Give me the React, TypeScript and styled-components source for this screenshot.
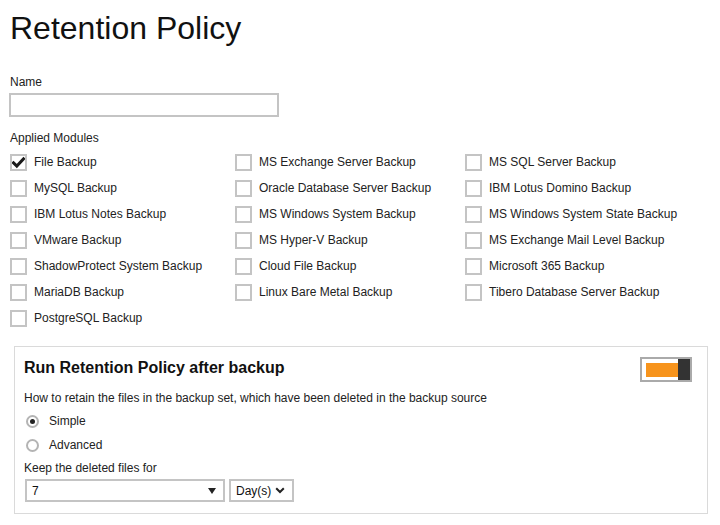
import styled, { createGlobalStyle } from "styled-components"

const GlobalStyle = createGlobalStyle`
  html, body {
    margin: 0;
    padding: 0;
    background: #fff;
  }
  body {
    font-family: "Liberation Sans", Arial, sans-serif;
    color: #222;
  }
`

const Page = styled.div`
  width: 720px;
  height: 525px;
  box-sizing: border-box;
  padding: 10px 10px 0;
  overflow: hidden;
`

const Title = styled.h1`
  margin: 0;
  font-size: 32px;
  line-height: 36px;
  font-weight: normal;
  color: #111;
`

const Label = styled.div<{ top?: number }>`
  margin-top: ${({ top = 0 }) => `${top}px`};
  font-size: 12px;
  line-height: 14px;
`

const TextInput = styled.input`
  display: block;
  margin: 4px 0 0 -1px;
  width: 270px;
  height: 24px;
  box-sizing: border-box;
  border: 2px solid #c4c4c4;
  outline: none;
  padding: 0 4px;
  font-family: inherit;
  font-size: 12px;
`

const ModuleGrid = styled.div`
  margin-top: 4px;
  display: grid;
  grid-template-columns: 225px 230px 1fr;
  grid-auto-rows: 26px;
`

const CheckRow = styled.label`
  display: flex;
  align-items: center;
  gap: 7px;
  font-size: 12px;
  line-height: 14px;
`

const Box = styled.span`
  width: 17px;
  height: 17px;
  box-sizing: border-box;
  border: 2px solid #c4c4c4;
  display: flex;
  align-items: center;
  justify-content: center;
  background: #fff;
`

const Panel = styled.section`
  margin: 15px 2px 0 4px;
  border: 1px solid #dadada;
  padding: 10px 15px 11px 9px;
`

const PanelHeader = styled.div`
  display: flex;
  justify-content: space-between;
  align-items: flex-start;
  height: 25px;
`

const PanelTitle = styled.h2`
  margin: 2px 0 0;
  font-size: 16px;
  line-height: 18px;
  font-weight: bold;
  color: #111;
`

const Toggle = styled.div`
  width: 52px;
  height: 25px;
  box-sizing: border-box;
  border: 2px solid #aaa;
  display: flex;
  align-items: center;
  padding-left: 4px;
  background: #fff;
`

const ToggleTrack = styled.span`
  width: 32px;
  height: 14px;
  background: #f7941d;
`

const ToggleKnob = styled.span`
  width: 12px;
  height: 21px;
  background: #333;
`

const RadioGroup = styled.div`
  margin-top: 4px;
`

const RadioRow = styled.label`
  display: flex;
  align-items: center;
  height: 24px;
  padding-left: 2px;
  gap: 10px;
  font-size: 12px;
  line-height: 14px;
`

const RadioCircle = styled.span<{ checked?: boolean }>`
  width: 13px;
  height: 13px;
  box-sizing: border-box;
  border-radius: 50%;
  border: 2px solid #b4b4b4;
  display: flex;
  align-items: center;
  justify-content: center;
  &::after {
    content: "";
    width: 5px;
    height: 5px;
    border-radius: 50%;
    background: ${({ checked }) => (checked ? "#222" : "transparent")};
  }
`

const SelectRow = styled.div`
  margin: 4px 0 0 1px;
  display: flex;
  gap: 4px;
`

const SelectBox = styled.div<{ width: number }>`
  width: ${({ width }) => `${width}px`};
  height: 23px;
  box-sizing: border-box;
  border: 2px solid #c4c4c4;
  display: flex;
  align-items: center;
  justify-content: space-between;
  padding: 0 7px 0 5px;
  font-size: 12px;
  color: #111;
`

const modules = [
  "File Backup",
  "MS Exchange Server Backup",
  "MS SQL Server Backup",
  "MySQL Backup",
  "Oracle Database Server Backup",
  "IBM Lotus Domino Backup",
  "IBM Lotus Notes Backup",
  "MS Windows System Backup",
  "MS Windows System State Backup",
  "VMware Backup",
  "MS Hyper-V Backup",
  "MS Exchange Mail Level Backup",
  "ShadowProtect System Backup",
  "Cloud File Backup",
  "Microsoft 365 Backup",
  "MariaDB Backup",
  "Linux Bare Metal Backup",
  "Tibero Database Server Backup",
  "PostgreSQL Backup",
]

const Check = () => (
  <svg width="13" height="13" viewBox="0 0 13 13">
    <path
      d="M1.5 6.8 L4.8 10 L11.5 2.8"
      fill="none"
      stroke="#1a1a1a"
      strokeWidth="3"
      strokeLinecap="square"
    />
  </svg>
)

const Caret = () => (
  <svg width="8" height="6" viewBox="0 0 8 6">
    <path d="M0 0 H8 L4 6 Z" fill="#222" />
  </svg>
)

const Chevron = () => (
  <svg width="10" height="7" viewBox="0 0 10 7">
    <path
      d="M1.2 1.2 L5 5 L8.8 1.2"
      fill="none"
      stroke="#222"
      strokeWidth="2"
    />
  </svg>
)

export default function App() {
  return (
    <Page>
      <GlobalStyle />
      <Title>Retention Policy</Title>

      <Label top={29}>Name</Label>
      <TextInput type="text" />

      <Label top={14}>Applied Modules</Label>
      <ModuleGrid>
        {modules.map((name, i) => (
          <CheckRow key={name}>
            <Box>{i === 0 && <Check />}</Box>
            {name}
          </CheckRow>
        ))}
      </ModuleGrid>

      <Panel>
        <PanelHeader>
          <PanelTitle>Run Retention Policy after backup</PanelTitle>
          <Toggle>
            <ToggleTrack />
            <ToggleKnob />
          </Toggle>
        </PanelHeader>

        <Label top={9}>
          How to retain the files in the backup set, which have been deleted in
          the backup source
        </Label>
        <RadioGroup>
          <RadioRow>
            <RadioCircle checked />
            Simple
          </RadioRow>
          <RadioRow>
            <RadioCircle />
            Advanced
          </RadioRow>
        </RadioGroup>

        <Label top={4}>Keep the deleted files for</Label>
        <SelectRow>
          <SelectBox width={200}>
            <span>7</span>
            <Caret />
          </SelectBox>
          <SelectBox width={65}>
            <span>Day(s)</span>
            <Chevron />
          </SelectBox>
        </SelectRow>
      </Panel>
    </Page>
  )
}
